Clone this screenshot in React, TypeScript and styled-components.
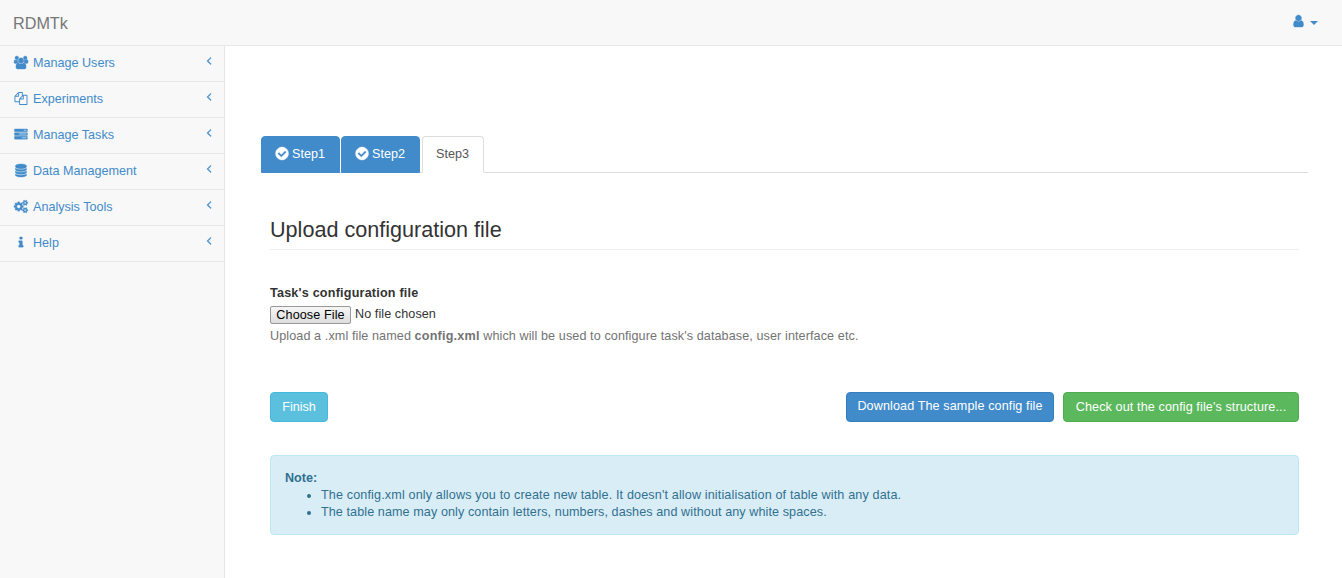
import React from "react";
import styled, { createGlobalStyle } from "styled-components";

const GlobalStyle = createGlobalStyle`
  *, *::before, *::after { box-sizing: border-box; }
  html, body { margin: 0; padding: 0; }
  body {
    background: #fff;
    color: #333;
    font-family: "Liberation Sans", Arial, sans-serif;
    font-size: 12.6px;
    line-height: 17px;
    overflow: hidden;
  }
`;

const smallCog =
  "v140q0 16-149 31-12 27-30 52 51 113 51 138 0 4-4 7-122 71-124 71-8 0-46-47t-52-68q-20 2-30 2t-30-2q-14 21-52 68t-46 47q-2 0-124-71-4-3-4-7 0-25 51-138-18-25-30-52-149-15-149-31v-140q0-16 149-31 13-29 30-52-51-113-51-138 0-4 4-7 4-2 35-20t59-34 30-16q8 0 46 46.5t52 67.5q20-2 30-2t30 2q51-71 92-112l6-2q4 0 124 70 4 3 4 7 0 25-51 138 17 23 30 52 149 15 149 31z";

const glyphs = {
  user: "M1536 1399q0 109-62.5 187t-150.5 78h-854q-88 0-150.5-78t-62.5-187q0-85 8.5-160.5t31.5-152 58.5-131 94-89 134.5-34.5q131 128 313 128t313-128q76 0 134.5 34.5t94 89 58.5 131 31.5 152 8.5 160.5zm-256-887q0 159-112.5 271.5t-271.5 112.5-271.5-112.5-112.5-271.5 112.5-271.5 271.5-112.5 271.5 112.5 112.5 271.5z",
  users: "M529 896q-162 5-265 128h-134q-82 0-138-40.5t-56-118.5q0-353 124-353 6 0 43.5 21t97.5 42.5 119 21.5q67 0 133-23-5 37-5 66 0 159 93 293zm1079 637q0 120-73 189.5t-194 69.5h-874q-121 0-194-69.5t-73-189.5q0-53 3.5-103.5t14-109 26.5-108.5 43-97.5 62-81 85.5-53.5 111.5-20q10 0 43 21.5t73 48 107 48 135 21.5 135-21.5 107-48 73-48 43-21.5q61 0 111.5 20t85.5 53.5 62 81 43 97.5 26.5 108.5 14 109 3.5 103.5zm-1024-1277q0 106-75 181t-181 75-181-75-75-181 75-181 181-75 181 75 75 181zm704 384q0 159-112.5 271.5t-271.5 112.5-271.5-112.5-112.5-271.5 112.5-271.5 271.5-112.5 271.5 112.5 112.5 271.5zm576 225q0 78-56 118.5t-138 40.5h-134q-103-123-265-128 93-134 93-293 0-29-5-66 66 23 133 23 59 0 119-21.5t97.5-42.5 43.5-21q124 0 124 353zm-128-609q0 106-75 181t-181 75-181-75-75-181 75-181 181-75 181 75 75 181z",
  files: "M1696 384q40 0 68 28t28 68v1216q0 40-28 68t-68 28h-960q-40 0-68-28t-28-68v-288h-544q-40 0-68-28t-28-68v-672q0-40 20-88t48-76l408-408q28-28 76-48t88-20h416q40 0 68 28t28 68v328q68-40 128-40h416zm-544 213l-299 299h299v-299zm-640-384l-299 299h299v-299zm196 647l316-316v-416h-384v416q0 40-28 68t-68 28h-416v640h512v-256q0-40 20-88t48-76zm956 804v-1152h-384v416q0 40-28 68t-68 28h-416v640h896z",
  tasks: "M1024 1408h640v-128h-640v128zm-384-512h1024v-128h-1024v128zm640-512h384v-128h-384v128zm512 832v256q0 26-19 45t-45 19h-1664q-26 0-45-19t-19-45v-256q0-26 19-45t45-19h1664q26 0 45 19t19 45zm0-512v256q0 26-19 45t-45 19h-1664q-26 0-45-19t-19-45v-256q0-26 19-45t45-19h1664q26 0 45 19t19 45zm0-512v256q0 26-19 45t-45 19h-1664q-26 0-45-19t-19-45v-256q0-26 19-45t45-19h1664q26 0 45 19t19 45z",
  database: "M896 768q237 0 443-43t325-127v170q0 69-103 128t-280 93.5-385 34.5-385-34.5-280-93.5-103-128v-170q119 84 325 127t443 43zm0 768q237 0 443-43t325-127v170q0 69-103 128t-280 93.5-385 34.5-385-34.5-280-93.5-103-128v-170q119 84 325 127t443 43zm0-384q237 0 443-43t325-127v170q0 69-103 128t-280 93.5-385 34.5-385-34.5-280-93.5-103-128v-170q119 84 325 127t443 43zm0-1152q208 0 385 34.5t280 93.5 103 128v128q0 69-103 128t-280 93.5-385 34.5-385-34.5-280-93.5-103-128v-128q0-69 103-128t280-93.5 385-34.5z",
  cogs: "M832 896q0-106-75-181t-181-75-181 75-75 181 75 181 181 75 181-75 75-181zm768 512q0-52-38-90t-90-38-90 38-38 90q0 53 37.5 90.5t90.5 37.5 90.5-37.5 37.5-90.5zm0-1024q0-52-38-90t-90-38-90 38-38 90q0 53 37.5 90.5t90.5 37.5 90.5-37.5 37.5-90.5zm-384 421v185q0 10-7 19.5t-16 10.5l-155 24q-11 35-32 76 34 48 90 115 7 11 7 20 0 12-7 19-23 30-82.5 89.5t-78.5 59.5q-11 0-21-7l-115-90q-37 19-77 31-11 108-23 155-7 24-30 24h-186q-11 0-20-7.5t-10-17.5l-23-153q-34-10-75-31l-118 89q-7 7-20 7-11 0-21-8-144-133-144-160 0-9 7-19 10-14 41-53t47-61q-23-44-35-82l-152-24q-10-1-17-9.5t-7-19.5v-185q0-10 7-19.5t16-10.5l155-24q11-35 32-76-34-48-90-115-7-11-7-20 0-12 7-20 22-30 82-89t79-59q11 0 21 7l115 90q34-18 77-32 11-108 23-154 7-24 30-24h186q11 0 20 7.5t10 17.5l23 153q34 10 75 31l118-89q8-7 20-7 11 0 21 8 144 133 144 160 0 8-7 19-12 16-42 54t-45 60q23 48 34 82l152 23q10 2 17 10.5t7 19.5z" +
    `M1856 1338${smallCog}M1856 314${smallCog}`,
  info: "M1216 1344v128q0 26-19 45t-45 19h-512q-26 0-45-19t-19-45v-128q0-26 19-45t45-19h64v-384h-64q-26 0-45-19t-19-45v-128q0-26 19-45t45-19h384q26 0 45 19t19 45v576h64q26 0 45 19t19 45zm-128-1152v192q0 26-19 45t-45 19h-256q-26 0-45-19t-19-45v-192q0-26 19-45t45-19h256q26 0 45 19t19 45z",
  angleLeft: "M1203 544q0 13-10 23l-393 393 393 393q10 10 10 23t-10 23l-50 50q-10 10-23 10t-23-10l-466-466q-10-10-10-23t10-23l466-466q10-10 23-10t23 10l50 50q10 10 10 23z",
  checkCircle: "M1412 734q0-28-18-46l-91-90q-19-19-45-19t-45 19l-408 407-226-226q-19-19-45-19t-45 19l-91 90q-18 18-18 46 0 27 18 45l362 362q19 19 45 19 27 0 46-19l543-543q18-18 18-45zm252 162q0 209-103 385.5t-279.5 279.5-385.5 103-385.5-103-279.5-279.5-103-385.5 103-385.5 279.5-279.5 385.5-103 385.5 103 279.5 279.5 103 385.5z",
};

type GlyphName = keyof typeof glyphs;

const Svg = styled.svg<{ $size: number; $weight: number }>`
  display: block;
  flex: none;
  width: ${(p) => (p.$size * 15) / 14}px;
  height: ${(p) => p.$size}px;
  overflow: visible;
  fill: currentColor;
  stroke: currentColor;
  stroke-width: ${(p) => p.$weight};
`;

function Icon({ name, size = 13 }: { name: GlyphName; size?: number }) {
  return (
    <Svg $size={size} $weight={name === "files" ? 0 : 50} viewBox="-64 0 1920 1792" aria-hidden="true">
      <path d={glyphs[name]} />
    </Svg>
  );
}

const Page = styled.div`
  display: flex;
  flex-direction: column;
  height: 578px;
`;

const Navbar = styled.header`
  display: flex;
  flex: none;
  align-items: center;
  justify-content: space-between;
  height: 46px;
  padding: 0 24px 0 13px;
  background: #f8f8f8;
  border-bottom: 1px solid #e7e7e7;
`;

const Brand = styled.a`
  color: #777;
  font-size: 16.2px;
  line-height: 18px;
`;

const UserMenu = styled.a`
  display: flex;
  align-items: center;
  gap: 4px;
  color: #428bca;
  padding-bottom: 3px;
`;

const Caret = styled.span`
  margin-top: 3px;
  border-top: 4px solid currentColor;
  border-left: 4px solid transparent;
  border-right: 4px solid transparent;
`;

const Body = styled.div`
  display: flex;
  flex: 1;
`;

const Sidebar = styled.nav`
  flex: none;
  width: 225px;
  background: #f8f8f8;
  border-right: 1px solid #e7e7e7;
`;

const NavItem = styled.a`
  display: flex;
  align-items: center;
  height: 36px;
  padding: 0 8px 1px 13px;
  border-bottom: 1px solid #e7e7e7;
  color: #428bca;
`;

const NavIcon = styled.span`
  display: flex;
  justify-content: center;
  width: 16px;
  margin-right: 4px;
  padding-bottom: 1px;
`;

const NavLabel = styled.span`
  flex: 1;
`;

const NavArrow = styled.span`
  padding-bottom: 5px;
`;

const Main = styled.main`
  flex: 1;
  padding: 90px 34px 0 36px;
`;

const Tabs = styled.div`
  display: flex;
  height: 37px;
  border-bottom: 1px solid #ddd;
`;

const Tab = styled.a<{ $active?: boolean }>`
  display: flex;
  align-items: center;
  gap: 2px;
  width: ${(p) => (p.$active ? 62 : 79)}px;
  height: 37px;
  margin-left: ${(p) => (p.$active ? 1 : 0)}px;
  margin-right: 1px;
  padding: 0 0 1px 13px;
  border: 1px solid ${(p) => (p.$active ? "#ddd" : "#428bca")};
  border-bottom-color: ${(p) => (p.$active ? "#fff" : "#428bca")};
  border-radius: 4px 4px 0 0;
  background: ${(p) => (p.$active ? "#fff" : "#428bca")};
  color: ${(p) => (p.$active ? "#555" : "#fff")};
`;

const TabMark = styled.span`
  margin-left: -1px;
  padding-bottom: 2px;
`;

const Panel = styled.section`
  padding: 43px 9px 0;
`;

const Heading = styled.h3`
  margin: 0 0 35px;
  height: 34px;
  border-bottom: 1px solid #eee;
  font-size: 21.6px;
  font-weight: 400;
  line-height: 27px;
`;

const FieldLabel = styled.label`
  display: block;
  height: 21px;
  font-weight: 700;
  letter-spacing: 0.2px;
`;

const FileInput = styled.div`
  display: flex;
  height: 18px;
  gap: 4px;
  line-height: 16px;
  letter-spacing: 0.08px;
`;

const FileButton = styled.button`
  width: 81px;
  height: 18px;
  padding: 0;
  border: 1px solid #999;
  border-radius: 2px;
  background: linear-gradient(#f6f6f6, #ddd);
  color: #000;
  font: inherit;
  line-height: 16px;
  letter-spacing: 0.1px;
  white-space: nowrap;
`;

const HelpText = styled.p`
  margin: 4px 0 47px;
  color: #737373;
  letter-spacing: 0.1px;

  strong { letter-spacing: 0.2px; }
`;

const Actions = styled.div`
  display: flex;
  gap: 9px;
`;

const tones = {
  info: ["#5bc0de", "#46b8da"],
  primary: ["#428bca", "#357ebd"],
  success: ["#5cb85c", "#4cae4c"],
};

const Button = styled.button<{ $tone: keyof typeof tones; $width: number; $lift?: boolean }>`
  width: ${(p) => p.$width}px;
  height: 30px;
  padding: 0 0 ${(p) => (p.$lift ? 2 : 0)}px;
  border: 1px solid ${(p) => tones[p.$tone][1]};
  border-radius: 4px;
  background: ${(p) => tones[p.$tone][0]};
  color: #fff;
  font: inherit;
  letter-spacing: 0.11px;
  white-space: nowrap;
  &:first-child { margin-right: auto; letter-spacing: 0; }
`;

const Note = styled.aside`
  height: 80px;
  margin-top: 33px;
  padding: 14px 14px 12px;
  border: 1px solid #bce8f1;
  border-radius: 4px;
  background: #d9edf7;
  color: #31708f;
`;

const NoteList = styled.ul`
  margin: 0;
  padding-left: 36px;
`;

const NoteItem = styled.li<{ $tracking: number }>`
  letter-spacing: ${(p) => p.$tracking}px;
`;

const menu: { icon: GlyphName; label: string }[] = [
  { icon: "users", label: "Manage Users" },
  { icon: "files", label: "Experiments" },
  { icon: "tasks", label: "Manage Tasks" },
  { icon: "database", label: "Data Management" },
  { icon: "cogs", label: "Analysis Tools" },
  { icon: "info", label: "Help" },
];

export default function App() {
  return (
    <Page>
      <GlobalStyle />
      <Navbar>
        <Brand>RDMTk</Brand>
        <UserMenu aria-label="Account">
          <Icon name="user" size={14} />
          <Caret />
        </UserMenu>
      </Navbar>
      <Body>
        <Sidebar>
          {menu.map((item) => (
            <NavItem key={item.label}>
              <NavIcon><Icon name={item.icon} /></NavIcon>
              <NavLabel>{item.label}</NavLabel>
              <NavArrow><Icon name="angleLeft" /></NavArrow>
            </NavItem>
          ))}
        </Sidebar>
        <Main>
          <Tabs>
            <Tab><TabMark><Icon name="checkCircle" size={15} /></TabMark>Step1</Tab>
            <Tab><TabMark><Icon name="checkCircle" size={15} /></TabMark>Step2</Tab>
            <Tab $active>Step3</Tab>
          </Tabs>
          <Panel>
            <Heading>Upload configuration file</Heading>
            <FieldLabel>Task's configuration file</FieldLabel>
            <FileInput>
              <FileButton type="button">Choose File</FileButton>
              <span>No file chosen</span>
            </FileInput>
            <HelpText>
              Upload a .xml file named <strong>config.xml</strong> which will be used to configure task's database, user interface etc.
            </HelpText>
            <Actions>
              <Button $tone="info" $width={58}>Finish</Button>
              <Button $tone="primary" $width={208} $lift>Download The sample config file</Button>
              <Button $tone="success" $width={236}>Check out the config file's structure...</Button>
            </Actions>
            <Note>
              <strong>Note:</strong>
              <NoteList>
                <NoteItem $tracking={0.14}>The config.xml only allows you to create new table. It doesn't allow initialisation of table with any data.</NoteItem>
                <NoteItem $tracking={0.085}>The table name may only contain letters, numbers, dashes and without any white spaces.</NoteItem>
              </NoteList>
            </Note>
          </Panel>
        </Main>
      </Body>
    </Page>
  );
}
